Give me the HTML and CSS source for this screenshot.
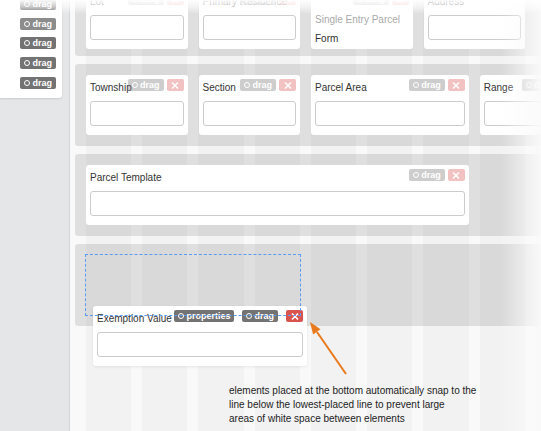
FILE: index.html
```html
<!DOCTYPE html>
<html lang="en">
<head>
    <meta charset="UTF-8">
    <meta name="viewport" content="width=device-width, initial-scale=1.0">
    <title>Form Builder</title>
    <link rel="stylesheet" href="styles.css">
</head>
<body>
    <aside class="sidebar">
        <div class="palette">
            <span class="badge"><i class="cog"></i>drag</span>
            <span class="badge badge-hover"><i class="cog"></i>drag</span>
            <span class="badge"><i class="cog"></i>drag</span>
            <span class="badge"><i class="cog"></i>drag</span>
            <span class="badge"><i class="cog"></i>drag</span>
        </div>
    </aside>

    <main class="canvas">
        <div class="line line-first">
            <div class="element span-2">
                <label>Lot</label>
                <input type="text">
                <div class="tools"><span class="badge"><i class="cog"></i>drag</span><span class="remove"><svg viewBox="0 0 8 7"><path d="M1 0.5 L7 6.5 M7 0.5 L1 6.5"/></svg></span></div>
            </div>
            <div class="element span-2">
                <label>Primary Residence</label>
                <input type="text">
                <div class="tools"><span class="badge"><i class="cog"></i>drag</span><span class="remove"><svg viewBox="0 0 8 7"><path d="M1 0.5 L7 6.5 M7 0.5 L1 6.5"/></svg></span></div>
            </div>
            <div class="element span-2">
                <label>&nbsp;</label>
                <div class="static">
                    <span class="hint">Single Entry Parcel</span>
                    <span class="value">Form</span>
                </div>
                <div class="tools"><span class="badge"><i class="cog"></i>drag</span><span class="remove"><svg viewBox="0 0 8 7"><path d="M1 0.5 L7 6.5 M7 0.5 L1 6.5"/></svg></span></div>
            </div>
            <div class="element span-2">
                <label>Address</label>
                <input type="text">
            </div>
        </div>

        <div class="line">
            <div class="element span-2">
                <label>Township</label>
                <input type="text">
                <div class="tools"><span class="badge"><i class="cog"></i>drag</span><span class="remove"><svg viewBox="0 0 8 7"><path d="M1 0.5 L7 6.5 M7 0.5 L1 6.5"/></svg></span></div>
            </div>
            <div class="element span-2">
                <label>Section</label>
                <input type="text">
                <div class="tools"><span class="badge"><i class="cog"></i>drag</span><span class="remove"><svg viewBox="0 0 8 7"><path d="M1 0.5 L7 6.5 M7 0.5 L1 6.5"/></svg></span></div>
            </div>
            <div class="element span-3">
                <label>Parcel Area</label>
                <input type="text">
                <div class="tools"><span class="badge"><i class="cog"></i>drag</span><span class="remove"><svg viewBox="0 0 8 7"><path d="M1 0.5 L7 6.5 M7 0.5 L1 6.5"/></svg></span></div>
            </div>
            <div class="element span-2">
                <label>Range</label>
                <input type="text">
                <div class="tools"><span class="badge"><i class="cog"></i>drag</span><span class="remove"><svg viewBox="0 0 8 7"><path d="M1 0.5 L7 6.5 M7 0.5 L1 6.5"/></svg></span></div>
            </div>
        </div>

        <div class="line">
            <div class="element span-7">
                <label>Parcel Template</label>
                <input type="text">
                <div class="tools"><span class="badge"><i class="cog"></i>drag</span><span class="remove"><svg viewBox="0 0 8 7"><path d="M1 0.5 L7 6.5 M7 0.5 L1 6.5"/></svg></span></div>
            </div>
        </div>

        <div class="line">
            <div class="drop-target span-4"></div>
        </div>

        <p class="note">elements placed at the bottom automatically snap to the<br>line below the lowest-placed line to prevent large<br>areas of white space between elements</p>

        <div class="element element-dragging">
            <label>Exemption Value</label>
            <input type="text">
            <div class="tools">
                <span class="badge"><i class="cog cog-solid"></i>properties</span>
                <span class="badge"><i class="cog"></i>drag</span>
                <span class="remove"><svg viewBox="0 0 8 7"><path d="M1 0.5 L7 6.5 M7 0.5 L1 6.5"/></svg></span>
            </div>
        </div>

        <svg class="arrow" viewBox="70 0 471 431">
            <line x1="346" y1="374" x2="317" y2="332"/>
            <polygon points="310,322 320.5,329.3 313.1,334.5"/>
        </svg>

        <div class="fade-right"></div>
    </main>

    <div class="fade-top"></div>
</body>
</html>
```

FILE: styles.css
```css
body {
    margin: 0;
    height: 431px;
    display: flex;
    overflow: hidden;
    position: relative;
    font-family: 'Liberation Sans', Arial, sans-serif;
    font-size: 10px;
    color: #333;
}
.sidebar {
    width: 69px;
    flex-shrink: 0;
    background: #e5e6e8;
    border-right: 1px solid #d4d5d7;
}
.palette {
    width: 62px;
    box-sizing: border-box;
    margin-top: -6px;
    padding: 4px 6px 9px 0;
    background: #fff;
    border-radius: 0 0 3px 0;
    box-shadow: 0 1px 2px rgba(0, 0, 0, 0.12);
    display: flex;
    flex-direction: column;
    align-items: flex-end;
    gap: 7.67px;
}
.badge {
    display: inline-flex;
    align-items: center;
    gap: 2px;
    height: 12px;
    padding: 0 4px;
    border-radius: 2px;
    background: #737373;
    color: #fff;
    font-size: 9px;
    font-weight: bold;
    line-height: 12px;
    white-space: nowrap;
}
.badge-hover {
    background: #8c8c8c;
}
.cog {
    width: 4px;
    height: 4px;
    border: 1.4px solid #fff;
    border-radius: 50%;
}
.cog-solid {
    border-width: 1.8px;
}
.remove {
    display: inline-flex;
    align-items: center;
    justify-content: center;
    width: 17px;
    height: 12px;
    border-radius: 2px;
    background: #d9534f;
}
.remove svg {
    width: 8px;
    height: 7px;
}
.remove path {
    stroke: #fff;
    stroke-width: 1.5;
    fill: none;
}

.canvas {
    flex: 1;
    position: relative;
    overflow: hidden;
    padding-left: 5px;
    background-color: #f9f9f9;
    background-image: repeating-linear-gradient(to right, #f9f9f9 0, #f9f9f9 11px, #f2f2f2 11px, #f2f2f2 56.25px);
    background-position: 5px 0;
    background-repeat: no-repeat;
}
.line {
    display: grid;
    grid-template-columns: repeat(9, 45.25px);
    column-gap: 11px;
    width: max-content;
    padding: 11px;
    margin-bottom: 8px;
    background: rgba(0, 0, 0, 0.1);
    border-radius: 3px;
}
.line-first {
    margin-top: -22px;
    padding-bottom: 7px;
}
.span-2 { grid-column: span 2; }
.span-3 { grid-column: span 3; }
.span-4 { grid-column: span 4; }
.span-7 { grid-column: span 7; }

.element {
    position: relative;
    height: 60px;
    box-sizing: border-box;
    padding: 6px 4px 9px;
    background: #fff;
    border-radius: 3px;
}
.element label {
    display: block;
    height: 14px;
    line-height: 14px;
    margin-bottom: 6px;
    white-space: nowrap;
}
.element input {
    display: block;
    width: 100%;
    height: 25px;
    box-sizing: border-box;
    margin: 0;
    border: 1px solid #ccc;
    border-radius: 3px;
    background: #fff;
}
.tools {
    position: absolute;
    top: 4px;
    right: 4px;
    display: flex;
    gap: 3px;
    opacity: 0.35;
}
.static span {
    display: block;
    line-height: 10px;
}
.static .hint {
    color: #aaa;
    margin-bottom: 9px;
}

.drop-target {
    height: 62px;
    margin: -1px;
    box-sizing: border-box;
    border: 1px dashed #5b9cf2;
    position: relative;
    z-index: 2;
}
.element-dragging {
    position: absolute;
    left: 23px;
    top: 306px;
    width: 214px;
    z-index: 1;
    box-shadow: 0 1px 3px rgba(0, 0, 0, 0.08);
}
.element-dragging .tools {
    opacity: 1;
    gap: 8px;
}

.note {
    margin: 58px 0 0 154px;
    line-height: 14px;
    color: #222;
}
.arrow {
    position: absolute;
    left: 0;
    top: 0;
    width: 471px;
    height: 431px;
    z-index: 3;
}
.arrow line {
    stroke: #e8791c;
    stroke-width: 2;
}
.arrow polygon {
    fill: #e8791c;
}
.fade-right {
    position: absolute;
    top: 0;
    right: 0;
    width: 40px;
    height: 100%;
    z-index: 4;
    background: linear-gradient(to right, rgba(250, 250, 250, 0), rgba(250, 250, 250, 0.97));
}
.fade-top {
    position: absolute;
    left: 0;
    top: 0;
    width: 100%;
    height: 14px;
    z-index: 5;
    background: linear-gradient(to bottom, rgba(255, 255, 255, 0.96), rgba(255, 255, 255, 0.6) 50%, rgba(255, 255, 255, 0));
}
```
